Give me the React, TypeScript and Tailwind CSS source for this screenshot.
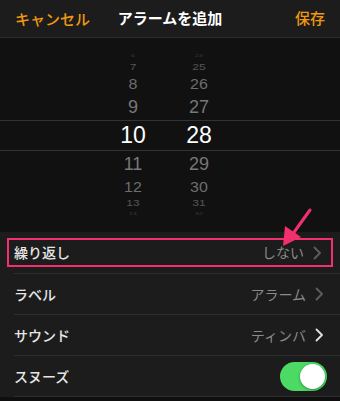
import React from "react";

const font = { fontFamily: '"Noto Sans CJK JP", "Noto Sans", sans-serif' };

type PRow = { h: string; m: string; cls: string; txt: string };

const rows: PRow[] = [
  { h: "6", m: "24", cls: "h-[10px]", txt: "text-[7px] text-[#3a3a3a] scale-y-50" },
  { h: "7", m: "25", cls: "h-[13px]", txt: "text-[12px] text-[#555] scale-y-75" },
  { h: "8", m: "26", cls: "h-[21px]", txt: "text-[16px] text-[#6d6d6d] scale-y-90" },
  { h: "9", m: "27", cls: "h-[26px]", txt: "text-[18px] text-[#777]" },
];
const rowsB: PRow[] = [
  { h: "11", m: "29", cls: "h-[25px]", txt: "text-[18px] text-[#777]" },
  { h: "12", m: "30", cls: "h-[21px]", txt: "text-[16px] text-[#6d6d6d] scale-y-90" },
  { h: "13", m: "31", cls: "h-[12px]", txt: "text-[12px] text-[#555] scale-y-75" },
  { h: "14", m: "32", cls: "h-[9px]", txt: "text-[7px] text-[#3a3a3a] scale-y-50" },
];

function PickerRow({ r }: { r: PRow }) {
  return (
    <div className={`flex items-center overflow-hidden ${r.cls}`}>
      <div className="w-[103px]" />
      <div className={`w-[60px] text-center leading-none ${r.txt}`}>{r.h}</div>
      <div className="w-[6px]" />
      <div className={`w-[60px] text-center leading-none ${r.txt}`}>{r.m}</div>
    </div>
  );
}

function Chevron({ color }: { color: string }) {
  return (
    <svg width="9" height="14" viewBox="0 0 9 14" className="ml-[9px]">
      <path d="M1.5 1.5 L7 7 L1.5 12.5" fill="none" stroke={color} strokeWidth="1.8" strokeLinecap="round" strokeLinejoin="round" />
    </svg>
  );
}

export default function App() {
  return (
    <div className="relative w-[340px] h-[401px] bg-[#0f0f0f] overflow-hidden" style={{ fontFamily: '"Liberation Sans", "Noto Sans CJK JP", sans-serif' }}>
      {/* header */}
      <div className="h-[38px] bg-[#1c1c1c] border-b border-[#2a2a2a] flex items-center px-[15px]" style={font}>
        <div className="flex-1">
          <span className="text-[15px] font-medium text-[#f0980f]">キャンセル</span>
        </div>
        <span className="text-[15px] font-bold text-white">アラームを追加</span>
        <div className="flex-1 flex justify-end">
          <span className="text-[15px] font-medium text-[#f0980f]">保存</span>
        </div>
      </div>

      {/* picker */}
      <div className="h-[194px] bg-[#111111] flex flex-col">
        <div className="h-[12px]" />
        {rows.map((r) => (
          <PickerRow key={r.h} r={r} />
        ))}
        <div className="h-[31px] border-y border-[#333] flex items-center">
          <div className="w-[103px]" />
          <div className="w-[60px] text-center text-[23px] leading-none text-white">10</div>
          <div className="w-[6px]" />
          <div className="w-[60px] text-center text-[23px] leading-none text-white">28</div>
        </div>
        {rowsB.map((r) => (
          <PickerRow key={r.h} r={r} />
        ))}
      </div>

      {/* list */}
      <div className="bg-[#1c1c1c]" style={font}>
        <div className="h-[41px] pl-[7px] pr-[7px] flex items-center">
          <div className="w-full h-[29px] border-2 border-[#f2306e] flex items-center pl-[5px] pr-[9px]">
            <span className="text-[14px] font-medium text-[#e6e6e6]">繰り返し</span>
            <span className="ml-auto text-[14px] text-[#8a8a8a]">しない</span>
            <Chevron color="#5e5e5e" />
          </div>
        </div>
        <div className="ml-[14px] h-px bg-[#2e2e2e]" />
        <div className="h-[40px] flex items-center pl-[14px] pr-[16px]">
          <span className="text-[14px] font-medium text-[#e6e6e6]">ラベル</span>
          <span className="ml-auto text-[14px] text-[#8a8a8a]">アラーム</span>
          <Chevron color="#5e5e5e" />
        </div>
        <div className="ml-[14px] h-px bg-[#2e2e2e]" />
        <div className="h-[40px] flex items-center pl-[14px] pr-[16px]">
          <span className="text-[14px] font-medium text-[#e6e6e6]">サウンド</span>
          <span className="ml-auto text-[14px] text-[#8a8a8a]">ティンバ</span>
          <Chevron color="#e0e0e0" />
        </div>
        <div className="ml-[14px] h-px bg-[#2e2e2e]" />
        <div className="h-[40px] flex items-center pl-[14px] pr-[13px]">
          <span className="text-[14px] font-medium text-[#e6e6e6]">スヌーズ</span>
          <div className="ml-auto w-[47px] h-[29px] rounded-full bg-[#4cd964] flex items-center justify-end pr-[2px]">
            <div className="w-[25px] h-[25px] rounded-full bg-white shadow-[0_1px_3px_rgba(0,0,0,0.35)]" />
          </div>
        </div>
        <div className="ml-[14px] h-px bg-[#2e2e2e]" />
      </div>

      {/* annotation arrow */}
      <svg className="absolute left-0 top-0 pointer-events-none" width="340" height="401">
        <line x1="310" y1="210" x2="292" y2="235" stroke="#f2306e" strokeWidth="3" strokeLinecap="round" />
        <polygon points="283,246 285,226 301,237" fill="#f2306e" />
      </svg>
    </div>
  );
}
